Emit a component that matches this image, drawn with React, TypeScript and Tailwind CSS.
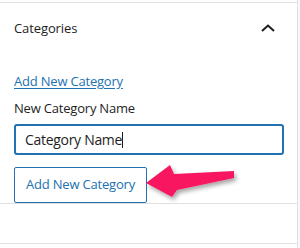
export default function App() {
  return (
    <div className="w-[300px] h-[248px] bg-[#f9f9f9] font-['Open_Sans',sans-serif] text-[#1e1e1e] overflow-hidden relative">
      <div className="w-[298px] h-full bg-white border-r border-[#e0e0e0] pt-[2px]">
        <div className="border-t border-[#e0e0e0]">
          <div className="h-[50px] flex items-center justify-between pl-[14px] pr-[22px]">
            <h2 className="text-[13px] font-medium leading-none tracking-[-0.1px]">Categories</h2>
            <svg width="14" height="8" viewBox="0 0 14 8" fill="none">
              <path d="M1 7 L7 1.5 L13 7" stroke="#1e1e1e" strokeWidth="2" />
            </svg>
          </div>
          <div className="px-[14px]">
            <a href="#" className="block mt-[20px] text-[13px] leading-[16px] tracking-[-0.2px] text-[#2271b1] underline underline-offset-2">
              Add New Category
            </a>
            <label className="block mt-[11px] text-[13px] leading-[16px] tracking-[-0.2px]">New Category Name</label>
            <div className="mt-[8px] h-[31px] w-[270px] border-2 border-[#2271b1] rounded-[3px] flex items-center pl-[9px]">
              <span className="text-[14px] leading-none tracking-[-0.3px]">Category Name</span>
              <span className="w-px h-[16px] bg-[#1e1e1e]" />
            </div>
            <button className="mt-[12px] h-[36px] w-[133px] border border-[#2271b1] rounded-[2px] text-[13px] tracking-[-0.2px] text-[#2271b1] flex items-center justify-center">
              Add New Category
            </button>
          </div>
          <div className="border-t border-[#e0e0e0] h-[40px]" />
          <div className="border-t border-[#e0e0e0]" />
        </div>
      </div>
      <svg className="absolute left-0 top-0" width="300" height="248" viewBox="0 0 300 248">
        <defs>
          <filter id="sh" x="-20%" y="-20%" width="140%" height="160%">
            <feDropShadow dx="2" dy="3" stdDeviation="2" floodColor="#000" floodOpacity="0.35" />
          </filter>
        </defs>
        <path
          d="M146 183 L170 165 L174 174 L234 171 L234 178 L177 190 L172 197 Z"
          fill="#f7195f"
          filter="url(#sh)"
        />
      </svg>
    </div>
  );
}
